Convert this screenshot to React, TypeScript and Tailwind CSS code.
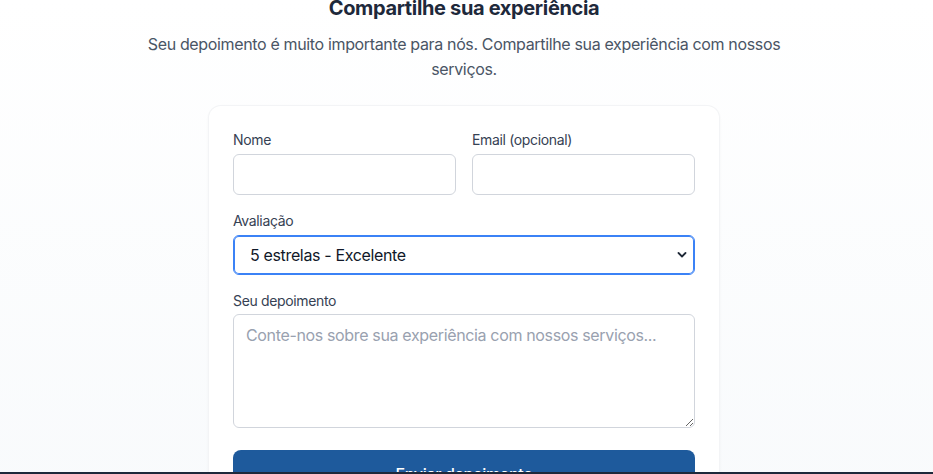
import React from "react";

export default function App() {
  return (
    <div
      className="min-h-[474px] w-full bg-linear-to-b from-white to-[#f8fafc] overflow-hidden tracking-[-0.35px]"
      style={{ fontFamily: "Inter, 'Noto Sans', sans-serif" }}
    >
      <div className="flex flex-col items-center pr-[5px]">
        <h2 className="mt-[-6px] text-xl leading-7 font-bold text-[#1e293b]">
          Compartilhe sua experiência
        </h2>
        <p className="mt-[10px] max-w-2xl text-center text-base leading-[25px] text-gray-600">
          Seu depoimento é muito importante para nós. Compartilhe sua experiência com nossos serviços.
        </p>
        <div className="mt-[24px] w-[510px] rounded-xl bg-white p-6 shadow-sm ring-1 ring-gray-100">
          <form className="flex flex-col gap-4" onSubmit={(e) => e.preventDefault()}>
            <div className="grid grid-cols-2 gap-4">
              <div>
                <label className="mb-1 block text-sm leading-5 font-normal text-gray-700">Nome</label>
                <input
                  type="text"
                  className="block h-[41px] w-full rounded-md border border-gray-300 px-3 py-2 text-base text-gray-900 outline-none"
                />
              </div>
              <div>
                <label className="mb-1 block text-sm leading-5 font-normal text-gray-700">Email (opcional)</label>
                <input
                  type="email"
                  className="block h-[41px] w-full rounded-md border border-gray-300 px-3 py-2 text-base text-gray-900 outline-none"
                />
              </div>
            </div>
            <div>
              <label className="mb-1 block text-sm leading-5 font-normal text-gray-700">Avaliação</label>
              <div className="relative">
                <select
                  defaultValue="5"
                  className="block h-[40px] w-full appearance-none rounded-md border border-[#3b82f6] bg-white pl-4 pr-8 text-base text-gray-900 outline-none ring-1 ring-inset ring-[#3b82f6]"
                >
                  <option value="5">5 estrelas - Excelente</option>
                  <option value="4">4 estrelas - Muito bom</option>
                  <option value="3">3 estrelas - Bom</option>
                  <option value="2">2 estrelas - Regular</option>
                  <option value="1">1 estrela - Ruim</option>
                </select>
                <svg
                  className="pointer-events-none absolute right-[8px] top-1/2 -translate-y-1/2"
                  width="10"
                  height="7"
                  viewBox="0 0 10 7"
                  fill="none"
                >
                  <path d="M1.5 1.5 L5 5 L8.5 1.5" stroke="#1f2937" strokeWidth="1.8" strokeLinecap="round" strokeLinejoin="round" />
                </svg>
              </div>
            </div>
            <div>
              <label className="mb-[3px] block text-sm leading-5 font-normal text-gray-700">Seu depoimento</label>
              <textarea
                rows={4}
                placeholder="Conte-nos sobre sua experiência com nossos serviços..."
                className="block h-[114px] w-full rounded-md border border-gray-300 px-3 py-2 text-base leading-6 text-gray-900 outline-none placeholder:text-gray-400"
              />
            </div>
            <button
              type="submit"
              className="mt-[6px] w-full rounded-lg bg-[#1e5a9c] py-3 text-base font-medium text-white"
            >
              Enviar depoimento
            </button>
          </form>
        </div>
      </div>
      <div className="fixed inset-x-0 bottom-0 h-[2px] bg-[#1e293b]" />
    </div>
  );
}
